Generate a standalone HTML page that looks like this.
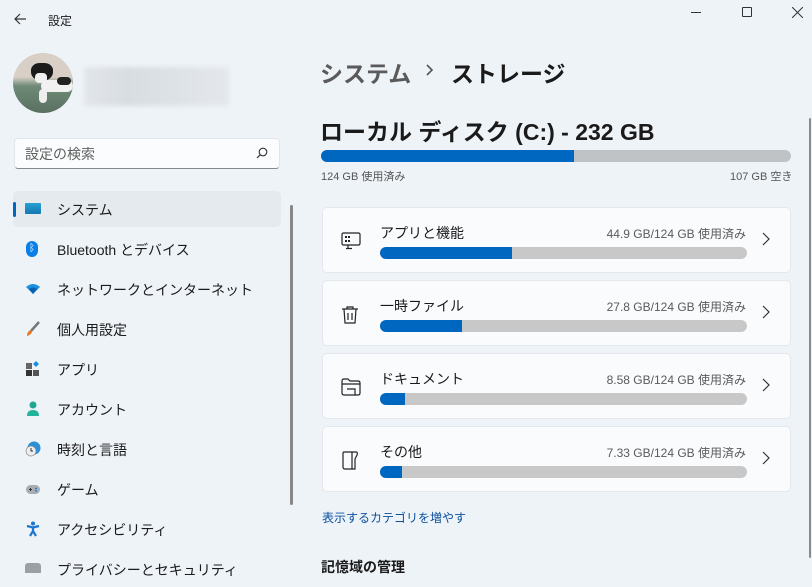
<!DOCTYPE html>
<html><head><meta charset="utf-8"><style>
*{margin:0;padding:0;box-sizing:border-box}
body{width:812px;height:575px;overflow:hidden;background:#eef3f8;font-family:"Liberation Sans","Noto Sans CJK JP",sans-serif;color:#1a1a1a;position:relative}
.a{position:absolute}
.t{font-size:13px;white-space:nowrap}
.nav{position:absolute;left:13px;width:268px;height:36px}
.nav .ic{position:absolute;left:12px;top:10px;width:16px;height:16px}
.nav .l{position:absolute;left:44px;top:9px;font-size:14px}
.card{position:absolute;left:322px;width:469px;height:66px;background:#f9fbfd;border:1px solid #e4e8ec;border-radius:5px}
.card .nm{position:absolute;left:57px;top:15px;font-size:14px}
.card .us{position:absolute;right:44px;top:17px;font-size:12px;color:#5a5a5a}
.card .bar{position:absolute;left:57px;top:39px;width:367px;height:12px;border-radius:6px;background:#c8c8c8;overflow:hidden}
.card .bar i{display:block;height:100%;background:#0067c0}
.card .ch{position:absolute;right:20px;top:24px}
.card .ico{position:absolute;left:18px;top:24px}
</style></head><body>
<svg class="a" style="left:13px;top:12px" width="14" height="14" viewBox="0 0 14 14"><path d="M13 7H2M7 2L2 7l5 5" stroke="#333" stroke-width="1.2" fill="none"/></svg>
<div class="a t" style="left:48px;top:12px;font-size:12px">設定</div>
<div class="a" style="left:691px;top:12px;width:10px;height:1px;background:#333"></div>
<div class="a" style="left:742px;top:7px;width:10px;height:10px;border:1px solid #333;border-radius:1px"></div>
<svg class="a" style="left:792px;top:7px" width="11" height="11"><path d="M0 0L11 11M11 0L0 11" stroke="#333" stroke-width="1"/></svg>
<!-- avatar -->
<div class="a" style="left:13px;top:53px;width:60px;height:60px;border-radius:50%;background:linear-gradient(#d8cfc6 0,#d8cfc6 40%,#6f8a78 55%,#5a7060);overflow:hidden">
<div class="a" style="left:18px;top:10px;width:22px;height:18px;background:#1b1b1b;border-radius:40% 40% 50% 50%"></div>
<div class="a" style="left:22px;top:20px;width:12px;height:10px;background:#f0f0f0;border-radius:4px"></div>
<div class="a" style="left:28px;top:27px;width:32px;height:12px;background:#f1f1f1;border-radius:6px"></div>
<div class="a" style="left:44px;top:24px;width:14px;height:8px;background:#222;border-radius:4px"></div>
<div class="a" style="left:26px;top:36px;width:8px;height:14px;background:#eee;border-radius:4px"></div>
</div>
<div class="a" style="left:84px;top:67px;width:145px;height:39px;background:linear-gradient(90deg,#e2e6ea,#d8dde2 30%,#e4e8ec);filter:blur(2px)"></div>
<div class="a" style="left:14px;top:138px;width:266px;height:31px;background:#fbfcfd;border:1px solid #e1e5e9;border-bottom-color:#868a8e;border-radius:4px"></div>
<div class="a t" style="left:25px;top:144px;font-size:14px;color:#5f5f5f">設定の検索</div>
<svg class="a" style="left:256px;top:147px" width="12" height="12"><circle cx="7" cy="5" r="3.8" stroke="#333" fill="none" stroke-width="1.1"/><path d="M4.3 7.7L1 11" stroke="#333" stroke-width="1.2"/></svg>
<div class="nav" style="top:191px;background:#e5eaef;border-radius:5px"><div class="a" style="left:0;top:11px;width:3px;height:15px;background:#0067c0;border-radius:2px"></div>
<div class="ic" style="left:12px;top:12px;width:16px;height:11px;background:linear-gradient(#2aa0d0,#1278b0);border-radius:1px"></div><div class="l">システム</div></div>
<div class="nav" style="top:231px"><div class="ic" style="left:13px;width:12px;height:16px;background:#0a7fe6;border-radius:6px;color:#fff;font-size:10px;text-align:center;line-height:16px">ᛒ</div><div class="l">Bluetooth とデバイス</div></div>
<div class="nav" style="top:271px"><svg class="ic" viewBox="0 0 16 16"><path d="M1 6Q8 0 15 6L8 13Z" fill="#1a8fe0"/><path d="M4 8Q8 5 12 8L8 13Z" fill="#0a5fb0"/></svg><div class="l">ネットワークとインターネット</div></div>
<div class="nav" style="top:311px"><svg class="ic" viewBox="0 0 16 16"><path d="M14 1L6 10" stroke="#777" stroke-width="2.5"/><path d="M6 9Q2 10 2 15Q6 14 7 11Z" fill="#e8782a"/></svg><div class="l">個人用設定</div></div>
<div class="nav" style="top:351px"><svg class="ic" viewBox="0 0 16 16"><rect x="1" y="2" width="6" height="6" fill="#666"/><rect x="1" y="9" width="6" height="6" fill="#333"/><rect x="8" y="9" width="6" height="6" fill="#555"/><path d="M11 0L14 3L11 6L8 3Z" fill="#1a8fe0"/></svg><div class="l">アプリ</div></div>
<div class="nav" style="top:391px"><svg class="ic" viewBox="0 0 16 16"><circle cx="8" cy="4" r="3.5" fill="#1fa88f"/><path d="M2 15Q2 9 8 9Q14 9 14 15Z" fill="#21b49a"/></svg><div class="l">アカウント</div></div>
<div class="nav" style="top:431px"><svg class="ic" viewBox="0 0 16 16"><circle cx="9" cy="7" r="6.5" fill="#2a90d8"/><circle cx="6" cy="10" r="5" fill="#eee" stroke="#888" stroke-width=".7"/><path d="M6 7v3h2" stroke="#333" fill="none"/></svg><div class="l">時刻と言語</div></div>
<div class="nav" style="top:471px"><svg class="ic" viewBox="0 0 16 16"><rect x="1" y="4" width="14" height="9" rx="4.5" fill="#a8adb3"/><path d="M4 8.5h3M5.5 7v3" stroke="#333"/><circle cx="11" cy="7.5" r=".9" fill="#1a6fd0"/><circle cx="11" cy="10" r=".9" fill="#1a6fd0"/></svg><div class="l">ゲーム</div></div>
<div class="nav" style="top:511px"><svg class="ic" viewBox="0 0 16 16"><circle cx="8" cy="2.5" r="2" fill="#1a78d0"/><path d="M2 5l6 1.5L14 5M8 6v4l-3 5M8 10l3 5" stroke="#1a78d0" stroke-width="2.2" fill="none"/></svg><div class="l">アクセシビリティ</div></div>
<div class="nav" style="top:551px"><div class="ic" style="background:#9aa0a6;border-radius:3px 3px 0 0;height:10px;top:12px"></div><div class="l" style="top:9px">プライバシーとセキュリティ</div></div>
<div class="a" style="left:290px;top:205px;width:3px;height:300px;background:#888;border-radius:2px"></div>
<!-- header -->
<div class="a" style="left:320px;top:55px;font-size:23px;color:#5a5a5a;white-space:nowrap;font-weight:bold;-webkit-text-stroke:0">システム</div>
<svg class="a" style="left:426px;top:64px" width="8" height="12"><path d="M1 1l5 5-5 5" stroke="#555" fill="none" stroke-width="1.6"/></svg>
<div class="a" style="left:451px;top:55px;font-size:23px;white-space:nowrap;font-weight:bold">ストレージ</div>
<div class="a" style="left:320px;top:113px;font-size:23px;font-weight:bold;white-space:nowrap">ローカル ディスク (C:) - 232 GB</div>
<div class="a" style="left:321px;top:150px;width:470px;height:12px;background:#c0c3c6;border-radius:6px;overflow:hidden"><div style="width:253px;height:100%;background:#0067c0"></div></div>
<div class="a" style="left:321px;top:168px;font-size:11px;color:#555">124 GB 使用済み</div>
<div class="a" style="left:730px;top:168px;font-size:11px;color:#555">107 GB 空き</div>
<div class="card" style="top:207px"><svg class="ico" width="20" height="18" viewBox="0 0 20 18"><rect x="1" y="1" width="18" height="12" rx="1.5" stroke="#222" fill="none" stroke-width="1.2"/><path d="M7 13v3M5 16.5h6" stroke="#222" stroke-width="1.2"/><g fill="#222"><rect x="4" y="4" width="2" height="2"/><rect x="7" y="4" width="2" height="2"/><rect x="4" y="8" width="2" height="2"/><rect x="7" y="8" width="2" height="2"/></g></svg>
<div class="nm">アプリと機能</div><div class="us">44.9 GB/124 GB 使用済み</div><div class="bar"><i style="width:132px"></i></div>
<svg class="ch" width="8" height="14"><path d="M1 1l6 6-6 6" stroke="#333" fill="none" stroke-width="1.2"/></svg></div>
<div class="card" style="top:280px"><svg class="ico" width="18" height="20" viewBox="0 0 18 20"><path d="M1 4h16M6 4V2h6v2M3 4l1 14h10l1-14M7 8v7M11 8v7" stroke="#222" fill="none" stroke-width="1.2"/></svg>
<div class="nm">一時ファイル</div><div class="us">27.8 GB/124 GB 使用済み</div><div class="bar"><i style="width:82px"></i></div>
<svg class="ch" width="8" height="14"><path d="M1 1l6 6-6 6" stroke="#333" fill="none" stroke-width="1.2"/></svg></div>
<div class="card" style="top:353px"><svg class="ico" width="20" height="18" viewBox="0 0 20 18"><path d="M1 3q0-2 2-2h4l2 2h8q2 0 2 2v10q0 2-2 2H3q-2 0-2-2Z" stroke="#222" fill="none" stroke-width="1.2"/><path d="M1 6h18M6 11h8v6" stroke="#222" fill="none" stroke-width="1.2"/></svg>
<div class="nm">ドキュメント</div><div class="us">8.58 GB/124 GB 使用済み</div><div class="bar"><i style="width:25px"></i></div>
<svg class="ch" width="8" height="14"><path d="M1 1l6 6-6 6" stroke="#333" fill="none" stroke-width="1.2"/></svg></div>
<div class="card" style="top:426px"><svg class="ico" width="18" height="20" viewBox="0 0 18 20"><path d="M3 1h12q2 0 1 3l-2 4v10H4q-2 0-2-2V2Q2 1 3 1ZM11 1v17" stroke="#222" fill="none" stroke-width="1.2"/></svg>
<div class="nm">その他</div><div class="us">7.33 GB/124 GB 使用済み</div><div class="bar"><i style="width:22px"></i></div>
<svg class="ch" width="8" height="14"><path d="M1 1l6 6-6 6" stroke="#333" fill="none" stroke-width="1.2"/></svg></div>
<div class="a t" style="left:322px;top:509px;font-size:12px;color:#0a4f9e">表示するカテゴリを増やす</div>
<div class="a t" style="left:321px;top:557px;font-size:14px;font-weight:bold">記憶域の管理</div>
<div class="a" style="left:809px;top:118px;width:2px;height:440px;background:#8a8a8a;border-radius:1px"></div>
</body></html>
